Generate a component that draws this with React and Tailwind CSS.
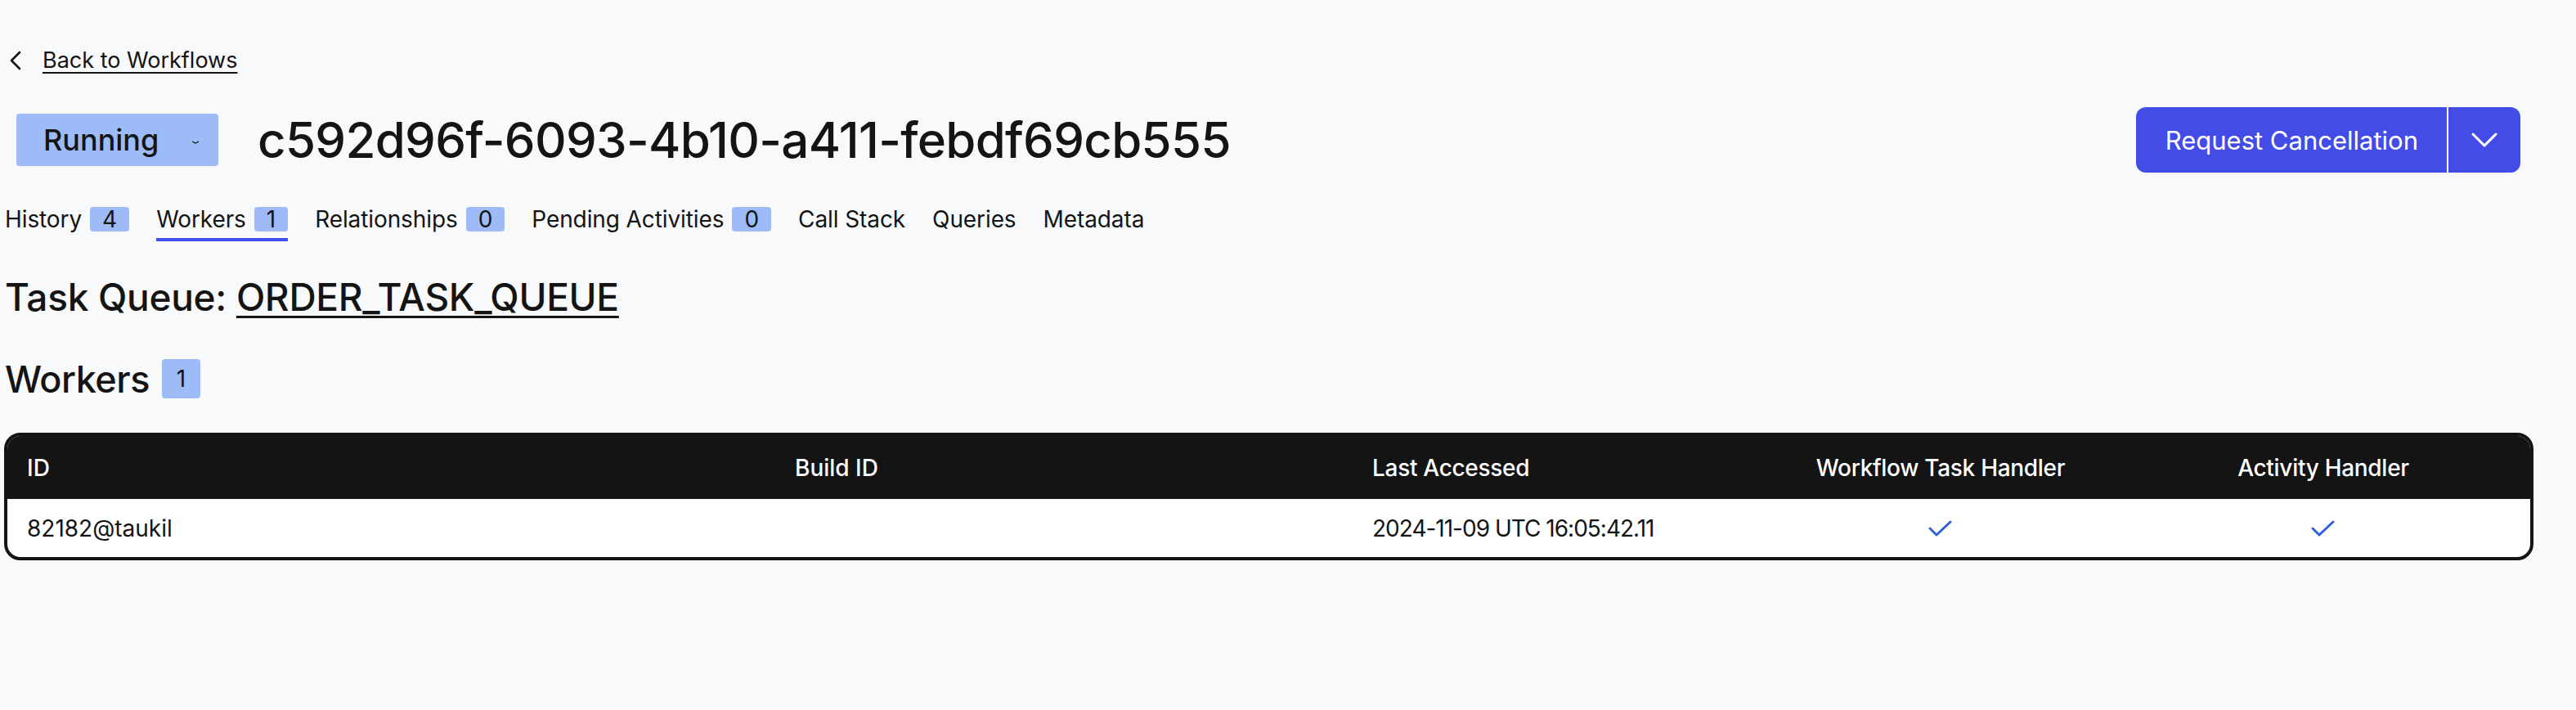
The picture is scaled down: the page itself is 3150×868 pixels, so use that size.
import { ChevronDown } from 'lucide-react';

const tabs = [
  { label: 'History', count: 4 },
  { label: 'Workers', count: 1, active: true },
  { label: 'Relationships', count: 0 },
  { label: 'Pending Activities', count: 0 },
  { label: 'Call Stack' },
  { label: 'Queries' },
  { label: 'Metadata' },
];

const workers = [
  { id: '82182@taukil', buildId: '', lastAccessed: '2024-11-09 UTC 16:05:42.11', workflowTask: true, activity: true },
];

function Badge({ children, className = '' }) {
  return (
    <span className={`inline-flex items-center justify-center rounded-[4px] bg-[#9dbbf7] text-[#141414] ${className}`}>
      {children}
    </span>
  );
}

function Tick() {
  return (
    <svg width="30" height="22" viewBox="0 0 30 22" fill="none">
      <path d="M2 10 L10 18 L27 2" stroke="#2f62d9" strokeWidth="3" strokeLinecap="round" strokeLinejoin="round" />
    </svg>
  );
}

export default function App() {
  return (
    <div
      className="min-h-screen bg-[#f8f9fb] text-[#141414] pl-[5px] pr-[52px]"
      style={{ fontFamily: 'Inter, "Noto Sans", sans-serif' }}
    >
      {/* back link */}
      <a href="#" className="flex items-center pt-[54px] pl-[5px] h-[94px] text-[27px] leading-[40px]">
        <svg width="18" height="26" viewBox="0 0 18 26" fill="none" className="mr-[24px]">
          <path d="M14 3 L4 13 L14 23" stroke="#141414" strokeWidth="2.6" strokeLinecap="round" strokeLinejoin="round" />
        </svg>
        <span className="underline decoration-[2px] underline-offset-[5px]">Back to Workflows</span>
      </a>

      {/* header */}
      <div className="flex items-center justify-between mt-[37px] h-[80px] pl-[15px] pr-[16px]">
        <div className="flex items-center gap-[48px]">
          <div className="flex items-center h-[64px] w-[247px] pl-[33px] rounded-[4px] bg-[#9dbbf7]">
            <span className="text-[36px] leading-none font-medium">Running</span>
            <svg className="ml-[40px] mt-[6px]" width="10" height="4" viewBox="0 0 10 4">
              <path d="M1 1 L5 3 L9 1" fill="none" stroke="#141414" strokeWidth="1.2" />
            </svg>
          </div>
          <h1 className="text-[60px] leading-none font-medium tracking-[-0.7px]">c592d96f-6093-4b10-a411-febdf69cb555</h1>
        </div>
        <div className="flex h-[80px] rounded-[12px] overflow-hidden bg-[#444ce7] text-white">
          <button className="pl-[36px] pr-[35px] text-[31px] leading-none">Request Cancellation</button>
          <div className="w-[2px] bg-[#f8f9fb]" />
          <button className="w-[88px] flex items-center justify-center">
            <ChevronDown className="w-[56px] h-[56px]" strokeWidth={1.3} />
          </button>
        </div>
      </div>

      {/* tabs */}
      <div className="flex items-start gap-[33px] mt-[38px] pl-[1px]">
        {tabs.map((t) => (
          <div
            key={t.label}
            className={`flex items-center gap-[10px] h-[46px] pb-[4px] border-b-[4px] ${t.active ? 'border-[#444ce7]' : 'border-transparent'}`}
          >
            <span className="text-[28px] leading-none tracking-[-0.1px]">{t.label}</span>
            {t.count !== undefined && (
              <Badge className="h-[30px] px-[15px] text-[28px] leading-none">{t.count}</Badge>
            )}
          </div>
        ))}
      </div>

      {/* task queue */}
      <h2 className="mt-[40px] text-[46px] leading-[56px] font-medium tracking-[-0.3px] pl-[1px]">
        Task Queue:{' '}
        <a href="#" className="underline decoration-[3px] underline-offset-[6px]">ORDER_TASK_QUEUE</a>
      </h2>

      {/* workers */}
      <div className="flex items-center gap-[15px] mt-[48px] pl-[1px]">
        <h2 className="text-[45px] leading-none font-medium tracking-[-0.5px]">Workers</h2>
        <Badge className="h-[48px] w-[47px] text-[28px] leading-none">1</Badge>
      </div>

      <div className="mt-[42px] rounded-[20px] border-[4px] border-[#141414] overflow-hidden bg-white">
        <div className="grid grid-cols-[936px_705px_486px_474px_1fr] items-center h-[77px] bg-[#141414] text-white text-[28px] font-medium">
          <div className="pl-[24px]">ID</div>
          <div className="pl-[27px]">Build ID</div>
          <div className="pl-[28px] tracking-[-0.3px]">Last Accessed</div>
          <div className="text-center tracking-[-0.3px]">Workflow Task Handler</div>
          <div className="text-center pr-[22px] tracking-[-0.3px]">Activity Handler</div>
        </div>
        {workers.map((w) => (
          <div key={w.id} className="grid grid-cols-[936px_705px_486px_474px_1fr] items-center h-[71px] text-[28px]">
            <div className="pl-[24px]">{w.id}</div>
            <div className="pl-[27px]">{w.buildId}</div>
            <div className="pl-[28px] tracking-[-1px]">{w.lastAccessed}</div>
            <div className="flex justify-center pt-[2px]">{w.workflowTask && <Tick />}</div>
            <div className="flex justify-center pt-[2px] pr-[22px]">{w.activity && <Tick />}</div>
          </div>
        ))}
      </div>
    </div>
  );
}
